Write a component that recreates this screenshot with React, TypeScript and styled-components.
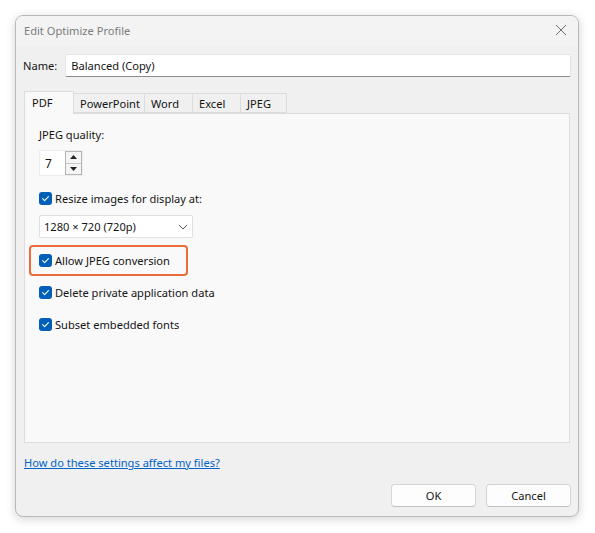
import React from "react";
import styled, { createGlobalStyle } from "styled-components";

const Global = createGlobalStyle`
  html, body { margin: 0; padding: 0; background: #ffffff; }
  body { font-family: "Noto Sans", "Open Sans", sans-serif; font-size: 11.1px; color: #141414; }
  * { box-sizing: border-box; }
`;

const Page = styled.div`
  width: 595px;
  height: 533px;
  padding: 15px 0 0 15px;
`;

const Dialog = styled.div`
  width: 564px;
  height: 502px;
  background: #f0f0f0;
  border: 1px solid #b9b9b9;
  border-radius: 8px;
  box-shadow: 0 2px 10px rgba(0, 0, 0, 0.18);
  display: flex;
  flex-direction: column;
  overflow: hidden;
`;

const TitleBar = styled.div`
  height: 30px;
  background: #f3f3f3;
  display: flex;
  align-items: center;
  justify-content: space-between;
  padding: 0 10px 2px 8px;
  color: #7c7c7c;
`;

const CloseBtn = styled.div`
  width: 14px;
  height: 14px;
  display: flex;
  align-items: center;
  justify-content: center;
`;

const Body = styled.div`
  flex: 1;
  display: flex;
  flex-direction: column;
  padding: 8px 7px 9px 7px;
`;

const NameRow = styled.div`
  display: flex;
  align-items: center;
  gap: 8px;
  height: 23px;
`;

const Label = styled.span`
  color: #141414;
`;

const TextInput = styled.div`
  flex: 1;
  height: 23px;
  background: #ffffff;
  border: 1px solid #e5e5e5;
  border-bottom: 1px solid #8a8a8a;
  border-radius: 2px;
  display: flex;
  align-items: center;
  padding: 0 5px;
`;

const TabStrip = styled.div`
  display: flex;
  align-items: flex-end;
  margin-top: 13px;
  padding-left: 1px;
  height: 23px;
`;

const Tab = styled.div<{ $active?: boolean; $w: number }>`
  width: ${(p) => p.$w}px;
  height: ${(p) => (p.$active ? "23px" : "20px")};
  padding: ${(p) => (p.$active ? "3px 0 0 7px" : "0 0 0 6px")};
  display: flex;
  align-items: ${(p) => (p.$active ? "flex-start" : "center")};
  background: ${(p) => (p.$active ? "#f9f9f9" : "#f0f0f0")};
  border: 1px solid #dcdcdc;
  border-bottom: ${(p) => (p.$active ? "none" : "1px solid #dcdcdc")};
  margin-left: ${(p) => (p.$active ? "0" : "-1px")};
  color: #141414;
  position: relative;
  z-index: ${(p) => (p.$active ? 1 : 0)};
  margin-bottom: ${(p) => (p.$active ? "-1px" : "0")};
`;

const Panel = styled.div`
  flex: 1;
  margin: 0 1px 0 1px;
  background: #f9f9f9;
  border: 1px solid #dcdcdc;
  padding: 13px 14px;
  display: flex;
  flex-direction: column;
`;

const FieldLabel = styled.div`
  line-height: 16px;
`;

const Spinner = styled.div`
  margin-top: 7px;
  width: 44px;
  height: 26px;
  display: flex;
  background: #ffffff;
  border: 1px solid #ececec;
`;

const SpinValue = styled.div`
  flex: 1;
  display: flex;
  align-items: center;
  padding-left: 5px;
  font-size: 12px;
`;

const SpinButtons = styled.div`
  width: 17px;
  display: flex;
  flex-direction: column;
  border: 1px solid #b5b5b5;
  background: #f4f4f4;
`;

const SpinBtn = styled.div<{ $top?: boolean }>`
  flex: 1;
  display: flex;
  align-items: center;
  justify-content: center;
  border-bottom: ${(p) => (p.$top ? "1px solid #c8c8c8" : "none")};
`;

const CheckRow = styled.div<{ $gap?: number }>`
  display: flex;
  align-items: center;
  gap: 3px;
  margin-top: ${(p) => p.$gap ?? 0}px;
  height: 16px;
`;

const Box = styled.div`
  width: 13px;
  height: 13px;
  border-radius: 3px;
  background: #005fb8;
  display: flex;
  align-items: center;
  justify-content: center;
`;

const Select = styled.div`
  margin-top: 9px;
  width: 154px;
  height: 23px;
  background: #ffffff;
  border: 1px solid #e0e0e0;
  border-radius: 2px;
  display: flex;
  align-items: center;
  justify-content: space-between;
  padding: 0 4px 0 4px;
`;

const Highlight = styled.div`
  margin: 7px 0 0 -10px;
  width: 159px;
  height: 31px;
  border: 2px solid #ec6c3c;
  border-radius: 4px;
  display: flex;
  align-items: center;
  padding-left: 8px;
`;

const Link = styled.a`
  margin-top: 12px;
  margin-left: 1px;
  color: #0063c8;
  text-decoration: underline;
  line-height: 16px;
  align-self: flex-start;
`;

const Footer = styled.div`
  display: flex;
  justify-content: flex-end;
  gap: 10px;
  margin-top: 13px;
`;

const Button = styled.div`
  width: 85px;
  height: 23px;
  background: #fdfdfd;
  border: 1px solid #d4d4d4;
  border-bottom-color: #c2c2c2;
  border-radius: 4px;
  display: flex;
  align-items: center;
  justify-content: center;
  color: #141414;
`;

const Check = () => (
  <svg width="9" height="9" viewBox="0 0 10 10">
    <path d="M1.8 5.2 L4 7.3 L8.3 2.8" fill="none" stroke="#ffffff" strokeWidth="1.2" strokeLinecap="round" strokeLinejoin="round" />
  </svg>
);

const CheckBox = ({ label, gap }: { label: string; gap?: number }) => (
  <CheckRow $gap={gap}>
    <Box>
      <Check />
    </Box>
    <span>{label}</span>
  </CheckRow>
);

const tabs = [
  { name: "PowerPoint", w: 72 },
  { name: "Word", w: 49 },
  { name: "Excel", w: 49 },
  { name: "JPEG", w: 47 },
];

export default function App() {
  return (
    <>
      <Global />
      <Page>
        <Dialog>
          <TitleBar>
            <span>Edit Optimize Profile</span>
            <CloseBtn>
              <svg width="12" height="12" viewBox="0 0 12 12">
                <path d="M1 1 L11 11 M11 1 L1 11" stroke="#6e6e6e" strokeWidth="1" />
              </svg>
            </CloseBtn>
          </TitleBar>
          <Body>
            <NameRow>
              <Label>Name:</Label>
              <TextInput>Balanced (Copy)</TextInput>
            </NameRow>
            <TabStrip>
              <Tab $active $w={50}>PDF</Tab>
              {tabs.map((t) => (
                <Tab key={t.name} $w={t.w}>
                  {t.name}
                </Tab>
              ))}
            </TabStrip>
            <Panel>
              <FieldLabel>JPEG quality:</FieldLabel>
              <Spinner>
                <SpinValue>7</SpinValue>
                <SpinButtons>
                  <SpinBtn $top>
                    <svg width="7" height="4" viewBox="0 0 7 4">
                      <path d="M0 4 L3.5 0 L7 4 Z" fill="#222" />
                    </svg>
                  </SpinBtn>
                  <SpinBtn>
                    <svg width="7" height="4" viewBox="0 0 7 4">
                      <path d="M0 0 L3.5 4 L7 0 Z" fill="#222" />
                    </svg>
                  </SpinBtn>
                </SpinButtons>
              </Spinner>
              <CheckBox label="Resize images for display at:" gap={14} />
              <Select>
                <span>1280 × 720 (720p)</span>
                <svg width="10" height="6" viewBox="0 0 10 6">
                  <path d="M1 1 L5 5 L9 1" fill="none" stroke="#555" strokeWidth="1" />
                </svg>
              </Select>
              <Highlight>
                <CheckBox label="Allow JPEG conversion" />
              </Highlight>
              <CheckBox label="Delete private application data" gap={8} />
              <CheckBox label="Subset embedded fonts" gap={16} />
            </Panel>
            <Link>How do these settings affect my files?</Link>
            <Footer>
              <Button>OK</Button>
              <Button>Cancel</Button>
            </Footer>
          </Body>
        </Dialog>
      </Page>
    </>
  );
}
